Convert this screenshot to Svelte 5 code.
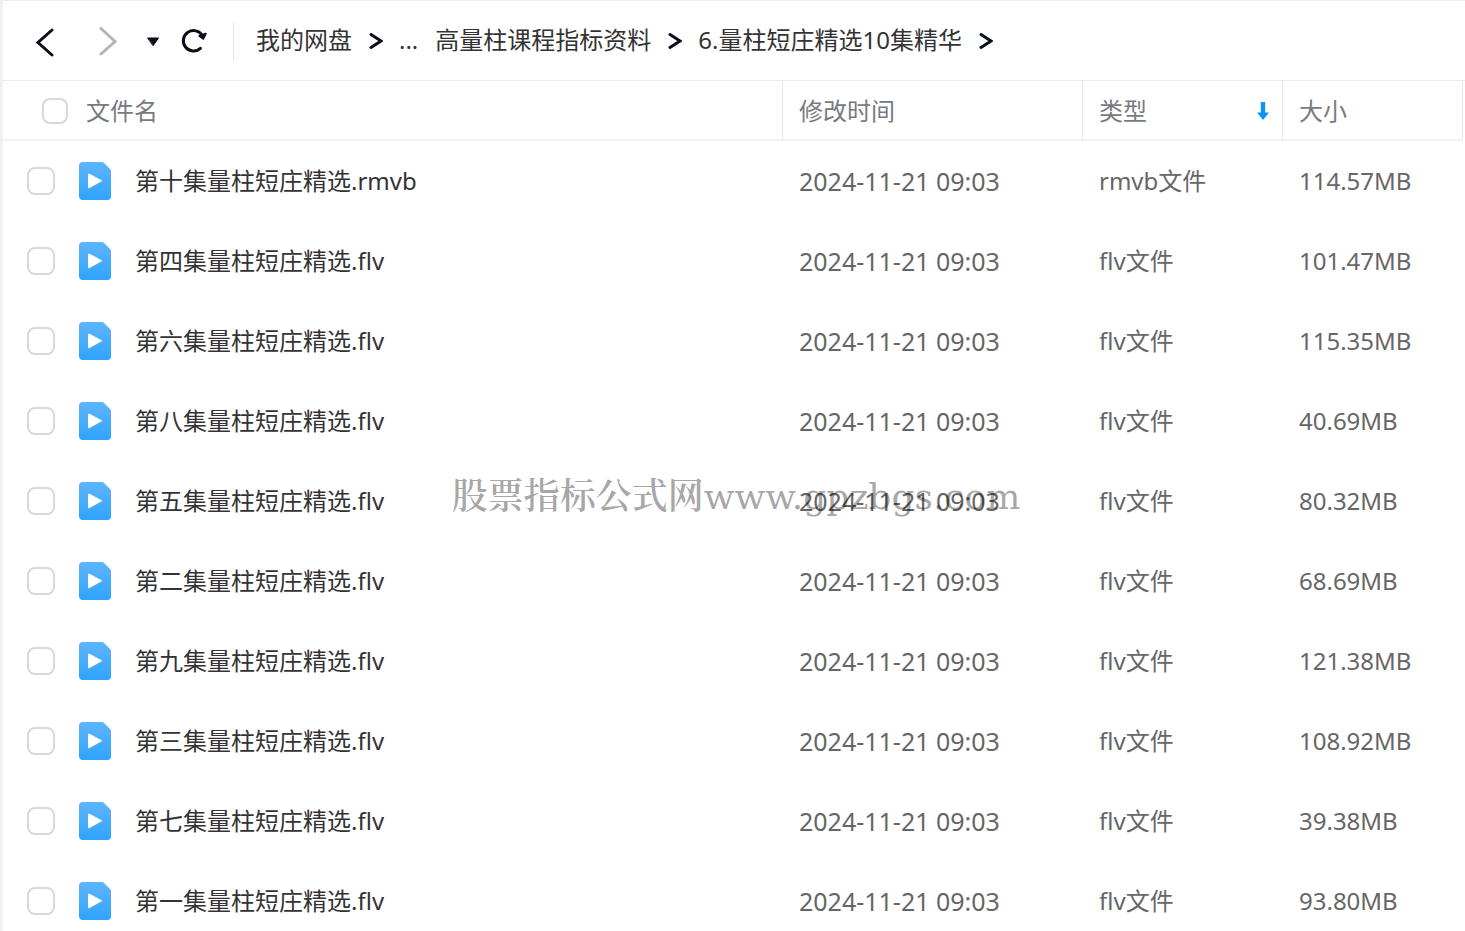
<script lang="ts">
  interface FileItem {
    id: number;
    name: string;
    modified: string;
    type: string;
    size: string;
    checked: boolean;
  }

  const row = (id: number, name: string, ext: string, size: string): FileItem => ({
    id,
    name: `${name}量柱短庄精选.${ext}`,
    modified: "2024-11-21 09:03",
    type: `${ext}文件`,
    size,
    checked: false,
  });

  let files = $state<FileItem[]>([
    row(1, "第十集", "rmvb", "114.57MB"),
    row(2, "第四集", "flv", "101.47MB"),
    row(3, "第六集", "flv", "115.35MB"),
    row(4, "第八集", "flv", "40.69MB"),
    row(5, "第五集", "flv", "80.32MB"),
    row(6, "第二集", "flv", "68.69MB"),
    row(7, "第九集", "flv", "121.38MB"),
    row(8, "第三集", "flv", "108.92MB"),
    row(9, "第七集", "flv", "39.38MB"),
    row(10, "第一集", "flv", "93.80MB"),
  ]);

  const crumbs = ["我的网盘", "...", "高量柱课程指标资料", "6.量柱短庄精选10集精华"];

  let allChecked = $derived(files.every((file) => file.checked));

  const toggleAll = () => {
    const next = !allChecked;
    files.forEach((file) => (file.checked = next));
  };
</script>

<div class="window">
  <header class="toolbar">
    <button class="back" aria-label="后退">
      <svg width="20" height="30" viewBox="0 0 20 30">
        <path d="M17 3 L3 15.500 L17 28" />
      </svg>
    </button>
    <button class="forward" aria-label="前进" disabled>
      <svg width="20" height="30" viewBox="0 0 20 30">
        <path d="M3 2.500 L17 15.500 L3 28" />
      </svg>
    </button>
    <button class="history" aria-label="历史记录">
      <svg width="14" height="12" viewBox="0 0 14 12">
        <path d="M2 3 H12.500 L7.300 10.500 Z" />
      </svg>
    </button>
    <button class="refresh" aria-label="刷新">
      <svg width="28" height="28" viewBox="0 0 28 28">
        <path d="M20.400 21.300 A10.200 10.200 0 1 1 22.500 8.900" />
        <path class="tip" d="M19.300 9 L25.700 6.800 L23.200 11.800 Z" />
      </svg>
    </button>
    <nav aria-label="路径">
      {#each crumbs as crumb, i}
        <a href="#{i}">{crumb}</a>
        {#if crumb !== "..."}
          <svg class="arrow" width="14" height="18" viewBox="0 0 14 18">
            <path d="M2 2.500 L12 9 L2 15.500" />
          </svg>
        {/if}
      {/each}
    </nav>
  </header>

  <table>
    <colgroup>
      <col />
      <col class="col-time" />
      <col class="col-type" />
      <col class="col-size" />
    </colgroup>
    <thead>
      <tr>
        <th>
          <div class="head-name">
            <input id="all" type="checkbox" checked={allChecked} onchange={toggleAll} />
            <label for="all">文件名</label>
          </div>
        </th>
        <th>修改时间</th>
        <th aria-sort="descending">
          <div class="head-type">
            <span>类型</span>
            <svg width="14" height="20" viewBox="0 0 14 20">
              <path d="M4.800 1 H9.200 V11.500 H13 L7 19 L1 11.500 H4.800 Z" />
            </svg>
          </div>
        </th>
        <th>大小</th>
      </tr>
    </thead>
    <tbody>
      {#each files as file (file.id)}
        <tr>
          <td>
            <div class="file">
              <input id="file-{file.id}" type="checkbox" bind:checked={file.checked} />
              <svg width="32" height="38" viewBox="0 0 32 38">
                <defs>
                  <linearGradient id="fill-{file.id}" x1="0" y1="0" x2="0" y2="1">
                    <stop offset="0" stop-color="#5fb4ff" />
                    <stop offset="1" stop-color="#30a3ff" />
                  </linearGradient>
                </defs>
                <path
                  fill="url(#fill-{file.id})"
                  d="M4 0 H23 Q24 0 25 1 L31 7 Q32 8 32 9 V34 Q32 38 28 38 H4 Q0 38 0 34 V4 Q0 0 4 0 Z"
                />
                <path
                  class="play"
                  d="M9 12.500 Q9 11 10.500 11.700 L22.300 18 Q23.500 18.800 22.300 19.600 L10.500 26 Q9 26.800 9 25.200 Z"
                />
              </svg>
              <label for="file-{file.id}">{file.name}</label>
            </div>
          </td>
          <td class="time">{file.modified}</td>
          <td>{file.type}</td>
          <td>{file.size}</td>
        </tr>
      {/each}
    </tbody>
  </table>

  <div class="watermark"><b>股票指标公式网</b>www.gpzbgs.com</div>
</div>

<style>
  :global(body) {
    background: #fff;
  }
  .window {
    position: relative;
    box-sizing: border-box;
    height: 100vh;
    overflow: hidden;
    padding-right: 2px;
    border-left: 3px solid #f1f1f1;
    border-top: 1px solid #ededed;
    font-family: "Noto Sans", "Noto Sans CJK SC", sans-serif;
    font-size: 24px;
    line-height: 32px;
    color: #333;
  }
  .toolbar {
    display: flex;
    align-items: center;
    height: 79px;
    margin-right: -2px;
    padding-left: 32px;
    border-bottom: 1px solid #ececec;
  }
  button {
    display: flex;
    padding: 0;
    border: none;
    background: none;
  }
  button svg,
  .arrow {
    fill: none;
    stroke: #0b0e1a;
    stroke-width: 3;
    stroke-linecap: round;
  }
  .back {
    padding-top: 2px;
  }
  .forward {
    margin-left: 43px;
  }
  .forward svg {
    stroke: #b4b4b4;
  }
  .history {
    margin-left: 28px;
  }
  .history svg {
    fill: #0b0e1a;
    stroke-width: 1;
    stroke-linejoin: round;
  }
  .refresh {
    margin-left: 20px;
  }
  .refresh .tip {
    fill: #0b0e1a;
    stroke-width: 2;
    stroke-linejoin: round;
  }
  nav {
    display: flex;
    align-items: center;
    height: 38px;
    margin-left: 25px;
    padding-left: 22px;
    border-left: 1px solid #e4e4e4;
  }
  nav a {
    margin-right: 17px;
    padding-bottom: 2px;
    color: #333;
    text-decoration: none;
    white-space: nowrap;
  }
  .arrow {
    margin-right: 16px;
  }
  table {
    width: 100%;
    table-layout: fixed;
    border-spacing: 0;
    color: #666;
  }
  .col-time {
    width: 300px;
  }
  .col-type {
    width: 200px;
  }
  .col-size {
    width: 180px;
  }
  th {
    box-sizing: border-box;
    height: 60px;
    padding: 2px 0 0 16px;
    border-right: 1px solid #e8e8e8;
    border-bottom: 2px solid #f2f2f2;
    color: #777a80;
    font-weight: 400;
    text-align: left;
  }
  th:first-child,
  td:first-child {
    padding-left: 0;
  }
  td {
    height: 80px;
    padding: 0 0 0 16px;
  }
  .time {
    font-size: 25px;
    line-height: 30px;
  }
  input {
    appearance: none;
    box-sizing: border-box;
    flex: none;
    width: 28px;
    height: 28px;
    margin: 0;
    border: 2px solid #d9d9d9;
    border-radius: 8px;
    background: #fff;
  }
  input:checked {
    border-color: #06a7ff;
    background: #06a7ff;
  }
  .head-name,
  .head-type,
  .file {
    display: flex;
    align-items: center;
  }
  .head-name {
    padding-left: 39px;
    gap: 18px;
  }
  .head-name input {
    width: 26px;
    height: 26px;
  }
  .head-type {
    justify-content: space-between;
    padding-right: 12px;
  }
  .head-type svg {
    fill: #0b94f5;
  }
  .file {
    padding-left: 24px;
    gap: 24px;
    color: #333;
  }
  .play {
    fill: #fff;
  }
  .watermark {
    position: absolute;
    top: 50%;
    left: 4px;
    right: 0;
    padding-top: 6px;
    color: rgba(0, 0, 0, 0.36);
    font-family: "DejaVu Serif", "Noto Serif CJK SC", "Noto Sans CJK SC", serif;
    font-size: 36px;
    line-height: 48px;
    text-align: center;
    white-space: nowrap;
    pointer-events: none;
  }
  .watermark b {
    font-weight: 600;
  }
</style>
